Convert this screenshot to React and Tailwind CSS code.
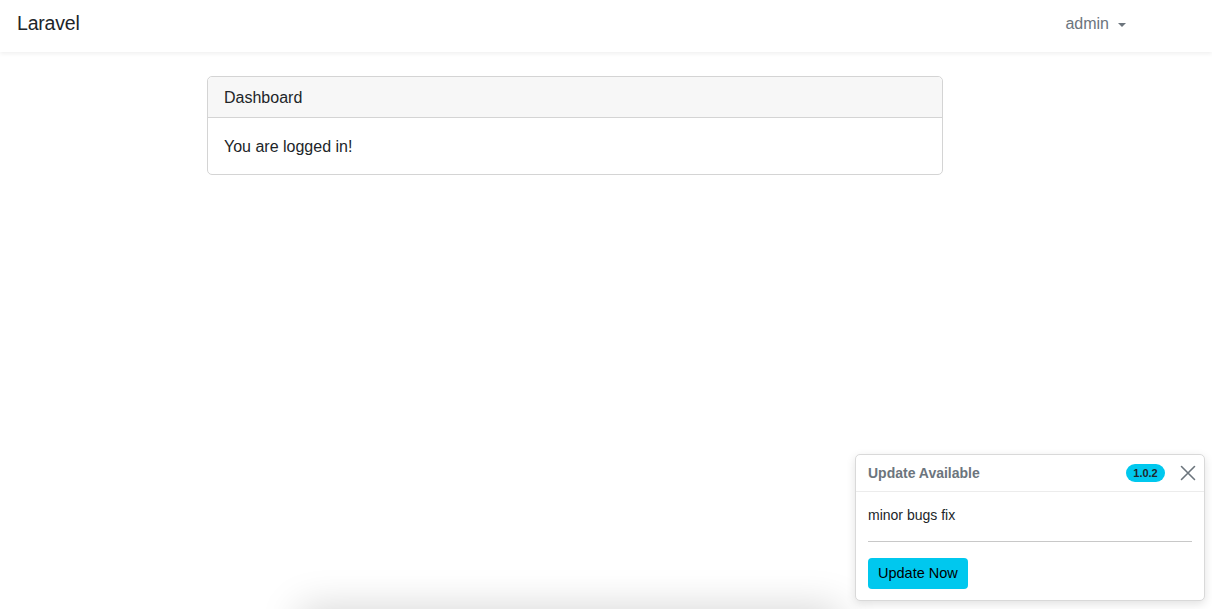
import React from 'react';

function CloseIcon() {
  return (
    <svg width="16" height="16" viewBox="0 0 16 16" className="text-[#6c757d]">
      <path d="M1.5 1.5 L14.5 14.5 M14.5 1.5 L1.5 14.5" stroke="currentColor" strokeWidth="1.6" strokeLinecap="round" />
    </svg>
  );
}

export default function App() {
  return (
    <div
      className="relative h-[609px] w-full overflow-hidden bg-white text-[#212529]"
      style={{ fontFamily: '"Liberation Sans", Arial, sans-serif' }}
    >
      {/* Navbar */}
      <nav className="flex h-[52px] items-center justify-between bg-white pl-[17px] pr-[86px] shadow-[0_2px_4px_rgba(0,0,0,0.06)]">
        <span className="-mt-[5px] text-[19.5px] leading-none tracking-[-0.2px] text-[#212529]">Laravel</span>
        <button className="-mt-[4px] flex items-center gap-[9px] text-[16px] text-[#6c757d]">
          admin
          <span className="mt-[2px] h-0 w-0 border-x-[4px] border-t-[4px] border-x-transparent border-t-[#6c757d]" />
        </button>
      </nav>

      {/* Main */}
      <main className="pt-[24px]">
        <div className="ml-[207px] w-[736px] rounded-[5px] border border-[#d4d4d4]">
          <div className="flex h-[41px] items-center rounded-t-[5px] border-b border-[#d4d4d4] bg-[#f7f7f7] px-[16px] pt-[1px] text-[16px]">
            Dashboard
          </div>
          <div className="flex h-[56px] items-center px-[16px] pt-[1px] text-[16px]">You are logged in!</div>
        </div>
      </main>

      {/* faint shadow of element below the fold */}
      <div className="absolute left-[300px] top-[609px] h-[40px] w-[540px] shadow-[0_0_40px_rgba(0,0,0,0.18)]" />

      {/* Update toast */}
      <div className="absolute left-[855px] top-[454px] w-[350px] rounded-[5px] border border-[#d9d9d9] bg-white shadow-[0_3px_10px_rgba(0,0,0,0.12)]">
        <div className="flex h-[37px] items-center border-b border-[#ececec] pl-[12px] pr-[8px]">
          <span className="text-[14px] font-bold text-[#6c757d]">Update Available</span>
          <span className="ml-auto flex h-[18px] w-[39px] items-center justify-center rounded-full bg-[#00c8ee] text-[11px] font-bold text-[#212529]">
            1.0.2
          </span>
          <span className="ml-[15px] flex items-center">
            <CloseIcon />
          </span>
        </div>
        <div className="px-[12px] pt-[13px] pb-[11px]">
          <p className="text-[14px] leading-[20px] text-[#212529]">minor bugs fix</p>
          <div className="mt-[16px] border-t border-[#c8c8c8]" />
          <button className="mt-[16px] h-[31px] rounded-[4px] bg-[#00c8ee] px-[10px] text-[14.5px] text-black">
            Update Now
          </button>
        </div>
      </div>
    </div>
  );
}
